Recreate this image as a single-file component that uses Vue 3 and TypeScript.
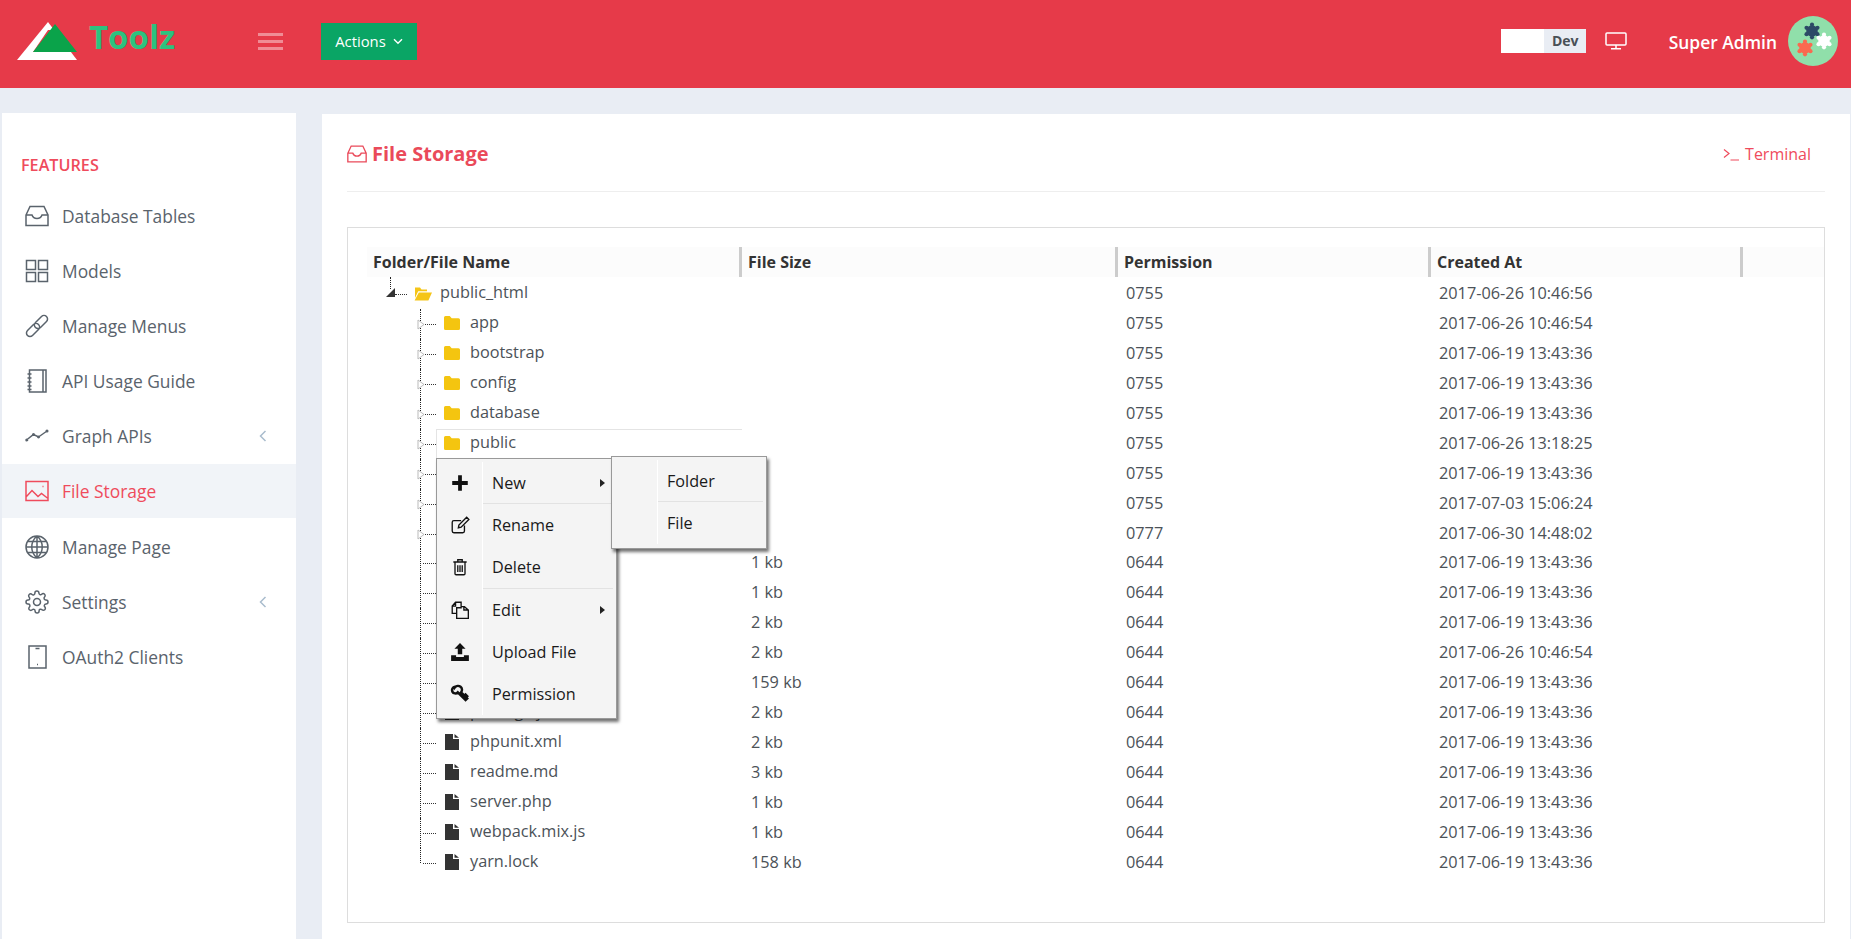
<template>
  <div class="page">
    <header class="topbar">
      <div class="brand">
        <svg class="brand__logo" width="62" height="40" viewBox="0 0 62 40">
          <polygon points="0,38 31,0 60,38" fill="#fff" />
          <polygon points="16,30 31,8 38,8 22,30" fill="#e63a48" />
          <polygon points="16,30 38,2 60,30" fill="#0aa34a" />
        </svg>
        <span class="brand__name">Toolz</span>
      </div>
      <button class="burger" aria-label="menu"><i></i><i></i><i></i></button>
      <button class="actions">
        Actions
        <svg width="10" height="7" viewBox="0 0 10 7"><path d="M1 1.2 5 5.2 9 1.2" fill="none" stroke="#fff" stroke-width="1.4" /></svg>
      </button>
      <div class="topbar__right">
        <div class="env"><span class="env__blank"></span><span class="env__tag">Dev</span></div>
        <svg class="monitor" width="22" height="18" viewBox="0 0 22 18" fill="none" stroke="#fff" stroke-width="1.5">
          <rect x="1" y="1" width="20" height="12" rx="1" />
          <path d="M11 13v3.5M6 16.8h10" />
        </svg>
        <span class="user">Super Admin</span>
        <svg class="avatar" width="50" height="50" viewBox="0 0 50 50">
          <circle cx="25" cy="25" r="25" fill="#90dfaa" />
          <g v-for="p in pieces" :key="p.color" :fill="p.color" :transform="`translate(${p.x} ${p.y})`">
            <circle r="5.8" />
            <circle v-for="k in knobs" :key="k.x" :cx="k.x" :cy="k.y" r="2.1" />
          </g>
        </svg>
      </div>
    </header>

    <div class="body">
      <aside class="sidebar">
        <div class="sidebar__title">FEATURES</div>
        <a v-for="item in nav" :key="item.label" class="nav" :class="{ 'nav--active': item.active }">
          <svg class="nav__icon" width="24" height="24" viewBox="0 0 24 24" fill="none" stroke="currentColor" stroke-width="1.5">
            <path :d="icons[item.icon]" />
          </svg>
          <span class="nav__label">{{ item.label }}</span>
          <svg v-if="item.more" class="nav__more" width="8" height="12" viewBox="0 0 8 12"><path d="M6.5 1 1.5 6l5 5" fill="none" stroke="#a9bccd" stroke-width="1.5" /></svg>
        </a>
      </aside>

      <main class="panel">
        <div class="panel__head">
          <h1 class="panel__title">
            <svg width="20" height="20" viewBox="0 0 24 24" fill="none" stroke="currentColor" stroke-width="1.6"><path :d="icons.inbox" /></svg>
            File Storage
          </h1>
          <a class="terminal">
            <svg width="17" height="14" viewBox="0 0 17 14" fill="none" stroke="currentColor" stroke-width="1.2"><path d="M1 2.5 6 6.5 1 10.5M7.5 13H16" /></svg>
            Terminal
          </a>
        </div>

        <div class="box">
          <div class="grid grid--head">
            <div v-for="c in columns" :key="c" class="th">{{ c }}</div>
          </div>

          <div v-for="(row, i) in rows" :key="row.name" class="grid grid--row">
            <div class="name" :class="{ 'name--root': i === 0, 'name--last': i === rows.length - 1 }">
              <svg v-if="i === 0" class="root-arrow" width="9" height="9" viewBox="0 0 9 9"><path d="M0 9 9 0v9z" fill="#333" /></svg>
              <svg v-else-if="row.type === 'folder'" class="twig" width="8" height="11" viewBox="0 0 8 11"><path d="M1 1l6 4.5-6 4.5z" fill="#fff" stroke="#bbb" /></svg>
              <span class="label" :class="{ 'label--picked': row.name === 'public' }">
                <svg v-if="i === 0" class="ficon ficon--open" width="18" height="15" viewBox="0 0 18 15"><path d="M1 1.5h5l1.5 2H13V5.2H4.2L1 12zM4.8 6.4H18l-3.6 8H.6z" fill="#f5c518" /></svg>
                <svg v-else-if="row.type === 'folder'" class="ficon" width="16" height="14" viewBox="0 0 16 14"><path d="M1.5 0h4.2l2 2.2h6.8A1.5 1.5 0 0 1 16 3.7v8.8a1.5 1.5 0 0 1-1.5 1.5h-13A1.5 1.5 0 0 1 0 12.500v-11A1.5 1.500 0 0 1 1.500 0z" fill="#f4c510" /></svg>
                <svg v-else class="ficon ficon--file" width="14" height="16" viewBox="0 0 14 16"><path d="M0 0h8v5h6v11H0zM9.500 0 14 3.800H9.500z" fill="#333" /></svg>
                {{ row.name }}
              </span>
            </div>
            <div class="td td--size">{{ row.size }}</div>
            <div class="td">{{ row.perm }}</div>
            <div class="td">{{ row.created }}</div>
          </div>

          <div class="ctx">
            <div v-for="m in menu" :key="m.label" class="ctx__item" :class="{ 'ctx__item--sep': m.sep }">
              <span class="ctx__icon">
                <svg width="20" height="20" viewBox="0 0 18 18"><path :d="menuIcons[m.icon]" :fill="m.solid ? '#111' : 'none'" :stroke="m.solid ? 'none' : '#111'" :stroke-width="m.icon === 'key' ? 2.2 : 1.2" /></svg>
              </span>
              <span class="ctx__text">{{ m.label }}<i v-if="m.arrow" class="ctx__arrow"></i></span>
            </div>
            <div class="ctx ctx--sub">
              <div class="ctx__item ctx__item--sep"><span class="ctx__icon"></span><span class="ctx__text">Folder</span></div>
              <div class="ctx__item"><span class="ctx__icon"></span><span class="ctx__text">File</span></div>
            </div>
          </div>
        </div>
      </main>
    </div>
  </div>
</template>

<script setup lang="ts">
type Row = { name: string; type: 'folder' | 'file'; size: string; perm: string; created: string }

const pieces = [
  { color: '#2c4a66', x: 24, y: 15 },
  { color: '#ffffff', x: 36, y: 25 },
  { color: '#fa6a50', x: 17, y: 32 },
]

const knobs = [0, 60, 120, 180, 240, 300].map((a) => ({
  x: 6.3 * Math.sin((a * Math.PI) / 180),
  y: -6.3 * Math.cos((a * Math.PI) / 180),
}))

const nav = [
  { label: 'Database Tables', icon: 'inbox' },
  { label: 'Models', icon: 'grid' },
  { label: 'Manage Menus', icon: 'link' },
  { label: 'API Usage Guide', icon: 'book' },
  { label: 'Graph APIs', icon: 'graph', more: true },
  { label: 'File Storage', icon: 'image', active: true },
  { label: 'Manage Page', icon: 'globe' },
  { label: 'Settings', icon: 'gear', more: true },
  { label: 'OAuth2 Clients', icon: 'tablet' },
]

const icons: Record<string, string> = {
  inbox: 'M1 11 5 2.500h14L23 11v10.500H1zM1 11h6c1 3 2.500 3.500 5 3.500s4-.5 5-3.500h6',
  grid: 'M1.500 1.500h9v9h-9zM13.500 1.500h9v9h-9zM1.500 13.500h9v9h-9zM13.500 13.500h9v9h-9z',
  link: 'M10.500 8.500l6-6a3.500 3.500 0 0 1 5 5l-6 6a3.500 3.500 0 0 1-5-5zM2.500 16.500l6-6a3.500 3.500 0 0 1 5 5l-6 6a3.500 3.500 0 0 1-5-5z',
  book: 'M4.500 1h16.500v22H4.500zM18 1v22M2.500 5h4M2.500 9h4M2.500 13h4M2.500 17h4M2.500 20.500h4',
  graph: 'M1.500 16 8.500 10.500l5 2.500L22 7M1 16a.8.8 0 1 0 1.600 0 .8.8 0 1 0-1.600 0zM7.700 10.500a.8.8 0 1 0 1.600 0 .8.8 0 1 0-1.600 0zM12.700 13a.8.8 0 1 0 1.600 0 .8.8 0 1 0-1.600 0zM21.200 7a.8.8 0 1 0 1.600 0 .8.8 0 1 0-1.600 0z',
  image: 'M1 2.500h22v19H1zM1 18l6-6.500 6 6 3.500-3 6.500 5M17.500 7.500h1',
  globe: 'M12 1a11 11 0 1 0 0 22 11 11 0 0 0 0-22zM12 1c-7 6-7 16 0 22M12 1c7 6 7 16 0 22M12 1v22M1 12h22M2.500 6.500h19M2.500 17.500h19',
  gear: 'M12 8.500a3.500 3.500 0 1 0 0 7 3.500 3.500 0 0 0 0-7zM19.400 15a1.650 1.650 0 0 0 .33 1.820l.06.06a2 2 0 1 1-2.830 2.830l-.06-.06a1.650 1.650 0 0 0-2.800 1.170V21a2 2 0 1 1-4 0v-.09a1.650 1.650 0 0 0-2.800-1.170l-.06.06a2 2 0 1 1-2.830-2.830l.06-.06a1.650 1.650 0 0 0-1.170-2.800H3a2 2 0 1 1 0-4h.09a1.650 1.650 0 0 0 1.170-2.800l-.06-.06a2 2 0 1 1 2.830-2.830l.06.06a1.650 1.650 0 0 0 2.800-1.170V3a2 2 0 1 1 4 0v.09a1.650 1.650 0 0 0 2.800 1.170l.06-.06a2 2 0 1 1 2.830 2.830l-.06.06a1.650 1.650 0 0 0 1.170 2.800H21a2 2 0 1 1 0 4h-.09a1.650 1.650 0 0 0-1.510 1.110z',
  tablet: 'M4 1h17v22H4zM10.500 3.500h4M12 19.500h1',
}

const columns = ['Folder/File Name', 'File Size', 'Permission', 'Created At']

function row(name: string, type: Row['type'], size: string, perm: string, created: string): Row {
  return { name, type, size, perm, created: '2017-' + created }
}

const rows: Row[] = [
  row('public_html', 'folder', '', '0755', '06-26 10:46:56'),
  row('app', 'folder', '', '0755', '06-26 10:46:54'),
  row('bootstrap', 'folder', '', '0755', '06-19 13:43:36'),
  row('config', 'folder', '', '0755', '06-19 13:43:36'),
  row('database', 'folder', '', '0755', '06-19 13:43:36'),
  row('public', 'folder', '', '0755', '06-26 13:18:25'),
  row('resources', 'folder', '', '0755', '06-19 13:43:36'),
  row('routes', 'folder', '', '0755', '07-03 15:06:24'),
  row('storage', 'folder', '', '0777', '06-30 14:48:02'),
  row('.env', 'file', '1 kb', '0644', '06-19 13:43:36'),
  row('.gitignore', 'file', '1 kb', '0644', '06-19 13:43:36'),
  row('artisan', 'file', '2 kb', '0644', '06-19 13:43:36'),
  row('composer.json', 'file', '2 kb', '0644', '06-26 10:46:54'),
  row('composer.lock', 'file', '159 kb', '0644', '06-19 13:43:36'),
  row('package.json', 'file', '2 kb', '0644', '06-19 13:43:36'),
  row('phpunit.xml', 'file', '2 kb', '0644', '06-19 13:43:36'),
  row('readme.md', 'file', '3 kb', '0644', '06-19 13:43:36'),
  row('server.php', 'file', '1 kb', '0644', '06-19 13:43:36'),
  row('webpack.mix.js', 'file', '1 kb', '0644', '06-19 13:43:36'),
  row('yarn.lock', 'file', '158 kb', '0644', '06-19 13:43:36'),
]

const menu = [
  { label: 'New', icon: 'plus', solid: true, arrow: true, sep: true },
  { label: 'Rename', icon: 'edit' },
  { label: 'Delete', icon: 'trash', sep: true },
  { label: 'Edit', icon: 'copy', arrow: true },
  { label: 'Upload File', icon: 'upload', solid: true },
  { label: 'Permission', icon: 'key' },
]

const menuIcons: Record<string, string> = {
  plus: 'M7.300 2h3.400v5.300H16v3.400h-5.300V16H7.300v-5.300H2V7.300h5.300z',
  edit: 'M13 9.500V14.500A1.500 1.500 0 0 1 11.500 16h-8A1.500 1.500 0 0 1 2 14.500V6.500A1.500 1.500 0 0 1 3.500 5H10M7.500 11.500l.5-2.500 7-7 2 2-7 7z',
  trash: 'M3 4.500h12M7 4.500V2.500h4v2M4.500 4.500V15a1 1 0 0 0 1 1h7a1 1 0 0 0 1-1V4.500M7 7.500v6M9 7.500v6M11 7.500v6',
  copy: 'M6 12H2V5.500L5 2h5v4M5 2v3.500H2M6 7h4l0-1h3l3.500 3v7.500H6zM12.500 6v3h4',
  upload: 'M9 1l5 5h-3v5H7V6H4zM1 12h4.500v1.500h7V12H17v5H1z',
  key: 'M4.500 2.500a3 3 0 1 0 2.500 5l7 7 1.500-1.500-1-1 1-1-1.500-1.500-1 1-3-3a3 3 0 0 0-5.500-4.500z',
}
</script>

<style>
html,
body {
  margin: 0;
  background: #e9edf4;
  overflow: hidden;
}
</style>

<style scoped>
.page {
  display: flex;
  flex-direction: column;
  height: 100vh;
  overflow: hidden;
  font-family: "Open Sans", "Liberation Sans", sans-serif;
  font-size: 16.3px;
  color: #4c5258;
}

.topbar {
  display: flex;
  align-items: center;
  flex: none;
  height: 88px;
  padding-left: 17px;
  background: #e63a49;
}

.brand {
  display: flex;
  align-items: flex-start;
  width: 241px;
  height: 40px;
  margin-top: -10px;
}

.brand__logo {
  margin-top: 3px;
}

.brand__name {
  margin: -4px 0 0 10px;
  font-size: 33px;
  font-weight: 700;
  line-height: 44px;
  color: #2dc27f;
}

.burger {
  display: flex;
  flex-direction: column;
  gap: 4px;
  width: 25px;
  margin: -6px 38px 0 0;
  padding: 0;
  border: 0;
  background: none;
}

.burger i {
  height: 3px;
  background: rgba(255, 255, 255, 0.42);
}

.actions {
  display: flex;
  align-items: center;
  justify-content: center;
  gap: 7px;
  width: 96px;
  height: 37px;
  margin: -6px 0 0;
  border: 0;
  background: #0aa565;
  color: #fff;
  font-family: inherit;
  font-size: 14.8px;
}

.topbar__right {
  display: flex;
  align-items: center;
  margin: -6px 13px 0 auto;
}

.env {
  display: flex;
  height: 24px;
}

.env__blank {
  width: 43px;
  background: #fff;
}

.env__tag {
  width: 42px;
  background: #e9edf4;
  color: #495057;
  font-size: 14px;
  font-weight: 700;
  line-height: 24px;
  text-align: center;
}

.monitor {
  margin-left: 19px;
}

.user {
  margin: 2px 11px 0 41.5px;
  color: #fff;
  font-size: 17.4px;
  font-weight: 600;
}

.body {
  display: flex;
  flex: 1;
  gap: 26px;
  min-height: 0;
  padding: 25px 1px 0 2px;
}

.sidebar {
  flex: none;
  box-sizing: border-box;
  width: 294px;
  padding-top: 41px;
  background: #fff;
}

.sidebar__title {
  height: 22px;
  margin: 0 0 13px 19px;
  color: #ef4b5c;
  font-size: 16.2px;
  font-weight: 600;
  line-height: 22px;
}

.nav {
  display: flex;
  align-items: center;
  height: 54px;
  margin-bottom: 1.1px;
  padding-left: 23px;
  color: #5a636c;
  font-size: 17.4px;
}

.nav__icon {
  flex: none;
}

.nav__label {
  margin-left: 13px;
}

.nav__more {
  margin-left: auto;
  margin-right: 29px;
}

.nav--active {
  background: #f1f4f8;
  color: #ef4b5c;
}

.panel {
  flex: 1;
  margin-top: 1px;
  padding: 0 25px;
  background: #fff;
}

.panel__head {
  display: flex;
  align-items: center;
  justify-content: space-between;
  box-sizing: border-box;
  height: 78px;
  padding: 2px 14px 0 0;
  border-bottom: 1px solid #eee;
}

.panel__title {
  display: flex;
  align-items: center;
  gap: 5px;
  margin: 0;
  color: #ea4a5a;
  font-size: 20px;
  font-weight: 700;
}

.terminal {
  display: flex;
  align-items: center;
  gap: 5px;
  margin-top: 1px;
  color: #ef4b5c;
  font-size: 16px;
}

.box {
  position: relative;
  box-sizing: border-box;
  height: 696px;
  margin-top: 35px;
  padding: 19px 0 0 19px;
  border: 1px solid #ddd;
}

.grid {
  display: grid;
  grid-template-columns: 375px 376px 313px 312px;
}

.grid--head {
  height: 30px;
  margin-bottom: 2px;
  background: #fcfcfc;
}

.th {
  box-sizing: border-box;
  padding: 2px 0 0 6px;
  border-right: 3px solid #ccc;
  color: #333;
  font-size: 16px;
  font-weight: 700;
  line-height: 27px;
}

.grid--row {
  height: 29.94px;
  line-height: 29.94px;
}

.td {
  padding-left: 8px;
}

.td--size {
  padding-left: 9px;
}

.name {
  position: relative;
  display: flex;
}

.name::before {
  content: "";
  position: absolute;
  left: 53px;
  top: 0;
  bottom: 0;
  border-left: 1px dotted #222;
}

.name--last::before {
  bottom: 50%;
}

.name--root::before {
  left: 23px;
  top: -2px;
  bottom: 20px;
}

.label {
  position: relative;
  display: flex;
  flex: 1;
  align-items: center;
  gap: 10px;
  box-sizing: border-box;
  height: 30px;
  margin-left: 69px;
  padding: 0 0 3px 7px;
  border: 0 solid transparent;
  border-width: 1px 0 0 1px;
}

.label::before {
  content: "";
  position: absolute;
  left: -14px;
  top: 14px;
  width: 13px;
  border-top: 1px dotted #333;
}

.label--picked {
  border-color: #e4e4e4;
}

.name--root .label {
  margin-left: 39px;
  gap: 8px;
}

.name--root .label::before {
  left: -12px;
  width: 12px;
}

.ficon {
  flex: none;
}

.ficon--file {
  margin-left: 1px;
  margin-right: 1px;
}

.twig {
  position: absolute;
  left: 50px;
  top: 10px;
  z-index: 1;
}

.root-arrow {
  position: absolute;
  left: 19px;
  top: 9px;
}

.ctx {
  position: absolute;
  left: 88px;
  top: 230px;
  z-index: 2;
  box-sizing: border-box;
  width: 181px;
  padding: 3px 0;
  border: 1px solid #999;
  background: #f4f4f4;
  box-shadow: 2px 3px 3px rgba(0, 0, 0, 0.55);
  color: #1a1a1a;
  font-size: 16.2px;
}

.ctx--sub {
  left: 174px;
  top: -3px;
  width: 156px;
  padding-bottom: 4px;
}

.ctx__item {
  display: flex;
  height: 42.2px;
  line-height: 43px;
}

.ctx__icon {
  display: flex;
  flex: none;
  align-items: center;
  justify-content: center;
  width: 45px;
  box-sizing: border-box;
}

.ctx__text {
  position: relative;
  flex: 1;
  padding-left: 9px;
  border-left: 1px solid #fff;
}

.ctx__item--sep .ctx__text::after {
  content: "";
  position: absolute;
  left: 0;
  right: 3px;
  bottom: 0;
  border-bottom: 1px solid #e2e2e2;
}

.ctx__arrow {
  position: absolute;
  right: 11px;
  top: 17px;
  border: 4px solid transparent;
  border-left: 5px solid #222;
  border-right: 0;
}
</style>
